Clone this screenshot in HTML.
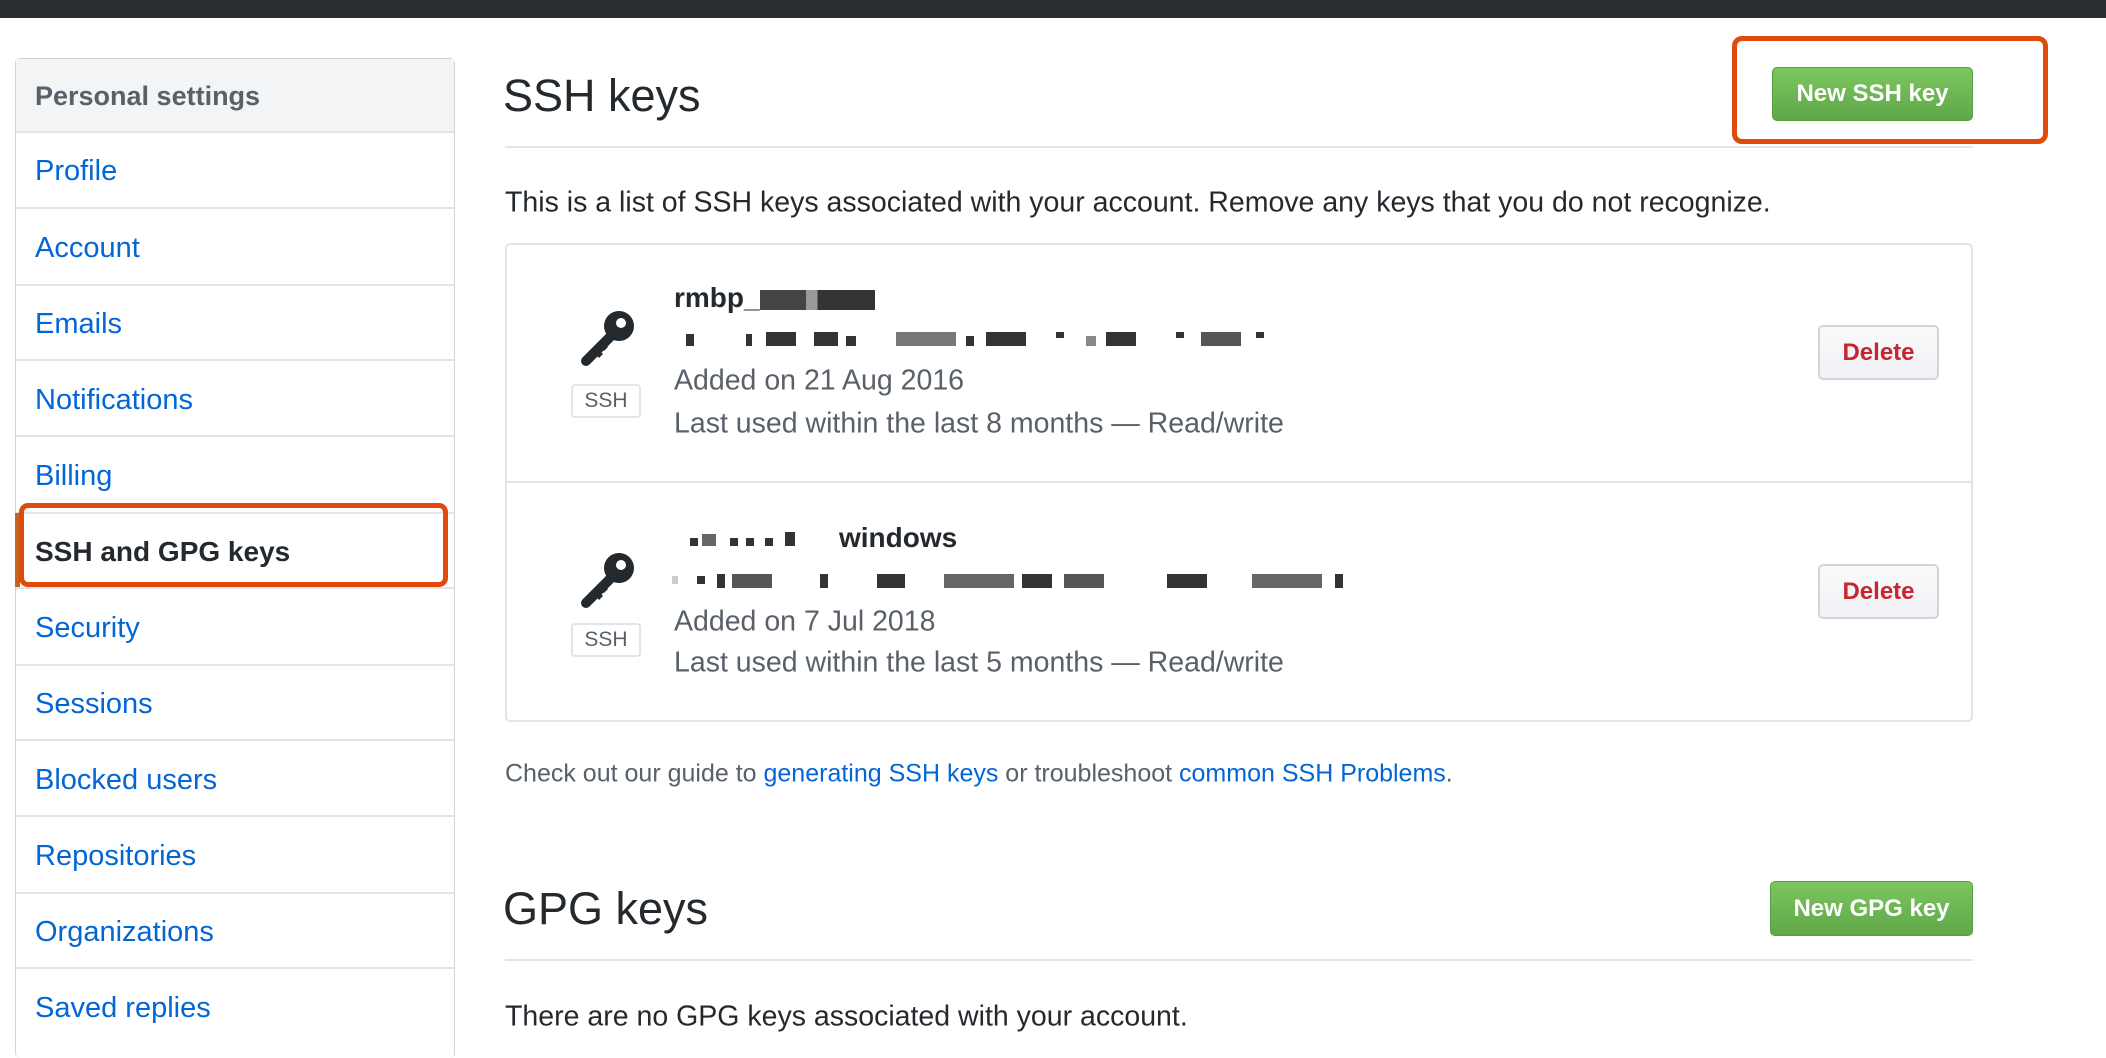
<!DOCTYPE html>
<html><head><meta charset="utf-8"><style>
*{margin:0;padding:0;box-sizing:border-box}
body{width:2106px;height:1042px;overflow:hidden;background:#fff;font-family:"Liberation Sans",Arial,sans-serif;color:#24292e;position:relative}
.a{position:absolute;white-space:nowrap}
.top{left:0;top:0;width:2106px;height:18px;background:#2b2f33}
.side{left:15px;top:58px;width:440px;height:1000px;border:1px solid #d1d5da;border-radius:5px;border-bottom:none}
.sh{left:16px;top:59px;width:438px;height:74px;background:#f3f4f6;border-bottom:2px solid #e1e4e8}
.sl{left:16px;width:438px;height:2px;background:#e1e4e8}
.st{left:35px;font-size:29px;line-height:32px;color:#0366d6}
.c{transform:translateY(-50%)}
.g{color:#586069}
.t{font-size:28.5px}
.btn{background:linear-gradient(#7cc65f,#5fa749);border:1px solid #56a043;border-radius:5px;color:#fff;font-weight:bold;font-size:24px;display:flex;align-items:center;justify-content:center}
.del{background:linear-gradient(#f9fafb,#eff1f4);border:2px solid #d1d5da;border-radius:5px;color:#cb2431;font-weight:bold;font-size:24px;display:flex;align-items:center;justify-content:center}
.badge{border:2px solid #e1e4e8;border-radius:4px;font-size:21px;color:#586069;display:flex;align-items:center;justify-content:center}
a{color:#0366d6;text-decoration:none}
</style></head><body>
<div class="a top"></div>
<div class="a side"></div>
<div class="a sh"></div>
<div class="a st c" style="top:96px;color:#586069;font-weight:bold;font-size:27px">Personal settings</div>
<div class="a sl" style="top:207px"></div>
<div class="a sl" style="top:284px"></div>
<div class="a sl" style="top:359px"></div>
<div class="a sl" style="top:435px"></div>
<div class="a sl" style="top:512px"></div>
<div class="a sl" style="top:587px"></div>
<div class="a sl" style="top:664px"></div>
<div class="a sl" style="top:739px"></div>
<div class="a sl" style="top:815px"></div>
<div class="a sl" style="top:892px"></div>
<div class="a sl" style="top:967px"></div>
<div class="a st c" style="top:171px">Profile</div>
<div class="a st c" style="top:248px">Account</div>
<div class="a st c" style="top:324px">Emails</div>
<div class="a st c" style="top:400px">Notifications</div>
<div class="a st c" style="top:476px">Billing</div>
<div class="a" style="left:15px;top:513px;width:5px;height:74px;background:#c8621c"></div>
<div class="a st c" style="top:552px;color:#24292e;font-weight:bold;font-size:28px">SSH and GPG keys</div>
<div class="a st c" style="top:628px">Security</div>
<div class="a st c" style="top:704px">Sessions</div>
<div class="a st c" style="top:780px">Blocked users</div>
<div class="a st c" style="top:856px">Repositories</div>
<div class="a st c" style="top:932px">Organizations</div>
<div class="a st c" style="top:1008px">Saved replies</div>
<div class="a" style="left:19px;top:503px;width:429px;height:84px;border:5px solid #e04a0c;border-radius:9px"></div>

<div class="a c" style="left:503px;top:96px;font-size:45px">SSH keys</div>
<div class="a" style="left:505px;top:146px;width:1468px;height:2px;background:#e1e4e8"></div>
<div class="a btn" style="left:1772px;top:67px;width:201px;height:54px">New SSH key</div>
<div class="a" style="left:1732px;top:36px;width:316px;height:108px;border:5px solid #e04a0c;border-radius:10px"></div>
<div class="a c t" style="left:505px;top:203px">This is a list of SSH keys associated with your account. Remove any keys that you do not recognize.</div>

<div class="a" style="left:505px;top:243px;width:1468px;height:479px;border:2px solid #e1e4e8;border-radius:5px"></div>
<div class="a" style="left:505px;top:481px;width:1468px;height:2px;background:#e1e4e8"></div>

<svg class="a" style="left:577px;top:310px" width="60" height="58" viewBox="0 0 60 58"><g fill="#24292e"><circle cx="42" cy="16" r="15"/><line x1="38" y1="22" x2="9" y2="51" stroke="#24292e" stroke-width="10" stroke-linecap="round"/><path d="M15 41 l7 7 l4-4 l-7-7z"/><path d="M21 35 l6 6 l4-4 l-6-6z"/></g><circle cx="44" cy="13" r="5" fill="#fff"/></svg>
<div class="a badge" style="left:571px;top:384px;width:70px;height:34px">SSH</div>
<div class="a c" style="left:674px;top:298px;font-size:28px;font-weight:bold">rmbp_<span style="display:inline-block;width:115px;height:20px;background:linear-gradient(90deg,#444 0 40%,#999 40% 50%,#333 50% 100%);vertical-align:middle"></span></div>
<svg class="a" style="left:686px;top:332px" width="650" height="18"><g fill="#333"><rect x="0" y="2" width="8" height="12"/><rect x="60" y="2" width="6" height="12"/><rect x="80" y="0" width="30" height="14"/><rect x="128" y="0" width="24" height="14"/><rect x="160" y="4" width="10" height="10"/><rect x="210" y="0" width="60" height="14" fill="#777"/><rect x="280" y="4" width="8" height="10"/><rect x="300" y="0" width="40" height="14"/><rect x="370" y="0" width="8" height="6"/><rect x="400" y="4" width="10" height="10" fill="#888"/><rect x="420" y="0" width="30" height="14"/><rect x="490" y="0" width="8" height="6"/><rect x="515" y="0" width="40" height="14" fill="#555"/><rect x="570" y="0" width="8" height="6"/></g></svg>
<div class="a c g t" style="left:674px;top:381px">Added on 21 Aug 2016</div>
<div class="a c g t" style="left:674px;top:424px">Last used within the last 8 months — Read/write</div>
<div class="a del" style="left:1818px;top:325px;width:121px;height:55px">Delete</div>

<svg class="a" style="left:577px;top:552px" width="60" height="58" viewBox="0 0 60 58"><g fill="#24292e"><circle cx="42" cy="16" r="15"/><line x1="38" y1="22" x2="9" y2="51" stroke="#24292e" stroke-width="10" stroke-linecap="round"/><path d="M15 41 l7 7 l4-4 l-7-7z"/><path d="M21 35 l6 6 l4-4 l-6-6z"/></g><circle cx="44" cy="13" r="5" fill="#fff"/></svg>
<div class="a badge" style="left:571px;top:623px;width:70px;height:34px">SSH</div>
<svg class="a" style="left:690px;top:532px" width="150" height="20"><g fill="#333"><rect x="0" y="6" width="8" height="8"/><rect x="12" y="2" width="14" height="12" fill="#666"/><rect x="40" y="6" width="8" height="8"/><rect x="56" y="6" width="8" height="8"/><rect x="75" y="6" width="8" height="8"/><rect x="95" y="0" width="10" height="14"/></g></svg>
<div class="a c" style="left:839px;top:538px;font-size:28px;font-weight:bold">windows</div>
<svg class="a" style="left:672px;top:574px" width="680" height="18"><g fill="#333"><rect x="0" y="2" width="6" height="8" fill="#ccc"/><rect x="25" y="2" width="8" height="8"/><rect x="45" y="0" width="8" height="14"/><rect x="60" y="0" width="40" height="14" fill="#555"/><rect x="148" y="0" width="8" height="14"/><rect x="205" y="0" width="28" height="14"/><rect x="272" y="0" width="70" height="14" fill="#666"/><rect x="350" y="0" width="30" height="14"/><rect x="392" y="0" width="40" height="14" fill="#555"/><rect x="495" y="0" width="40" height="14"/><rect x="580" y="0" width="70" height="14" fill="#666"/><rect x="663" y="0" width="8" height="14"/></g></svg>
<div class="a c g t" style="left:674px;top:622px">Added on 7 Jul 2018</div>
<div class="a c g t" style="left:674px;top:663px">Last used within the last 5 months — Read/write</div>
<div class="a del" style="left:1818px;top:564px;width:121px;height:55px">Delete</div>

<div class="a c g" style="left:505px;top:774px;font-size:25px">Check out our guide to <a>generating SSH keys</a> or troubleshoot <a>common SSH Problems</a>.</div>

<div class="a c" style="left:503px;top:909px;font-size:45px">GPG keys</div>
<div class="a" style="left:505px;top:959px;width:1468px;height:2px;background:#e1e4e8"></div>
<div class="a btn" style="left:1770px;top:881px;width:203px;height:55px">New GPG key</div>
<div class="a c t" style="left:505px;top:1017px">There are no GPG keys associated with your account.</div>
</body></html>
